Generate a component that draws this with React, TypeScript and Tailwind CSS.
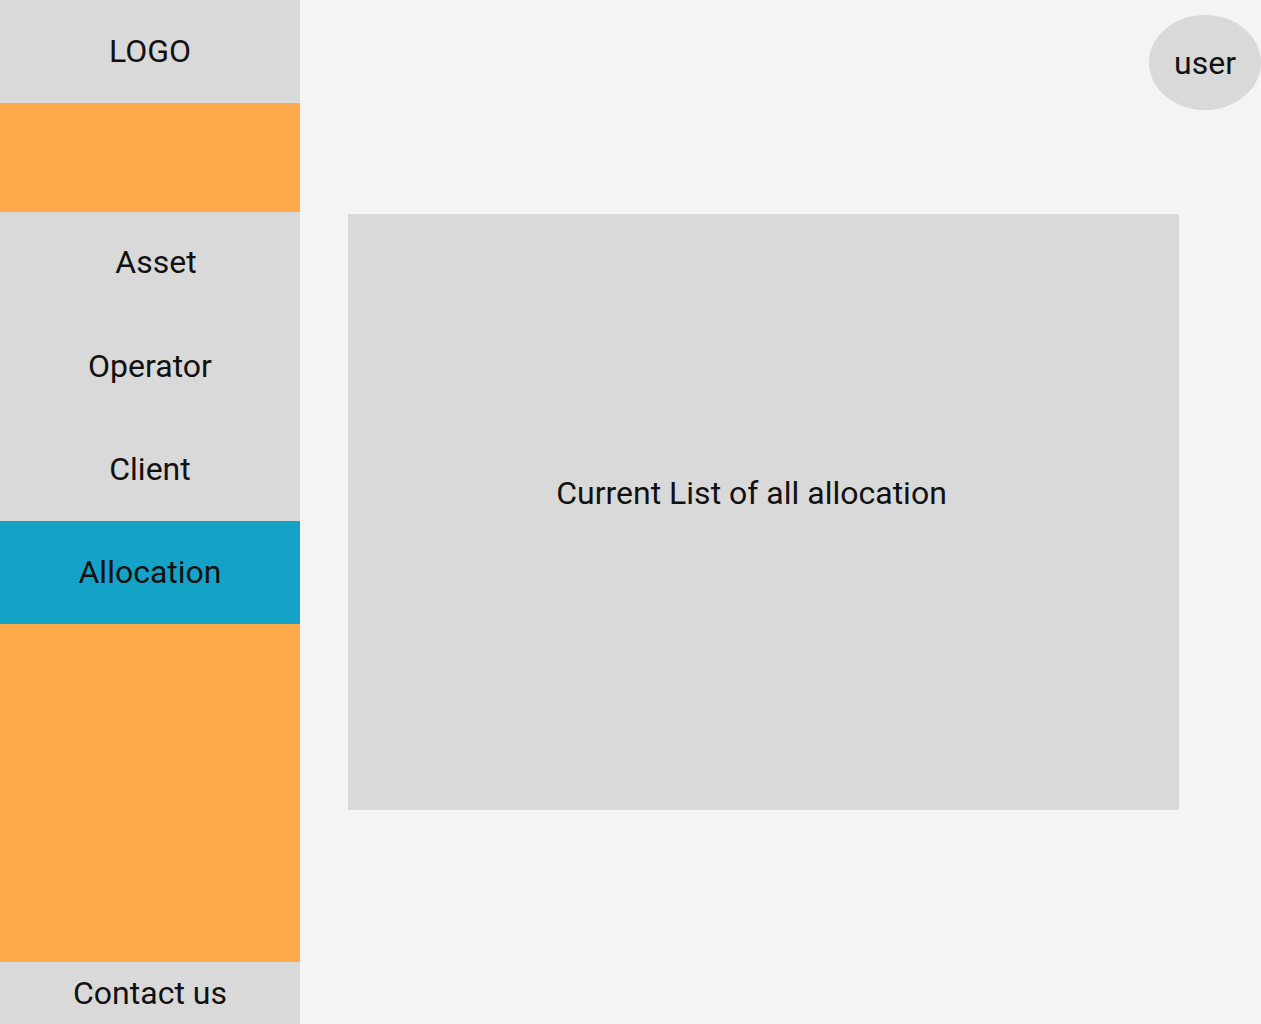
const navTop = [
  { label: "Asset", extra: "pl-[12px] pb-[4px]" },
  { label: "Operator", extra: "pb-[2px]" },
  { label: "Client", extra: "pb-[2px]" },
]

export default function App() {
  return (
    <div className="flex w-full h-[1024px] bg-[#f4f4f4] text-[#111] font-['Roboto',sans-serif] text-[32px] overflow-hidden">
      <aside className="w-[300px] shrink-0 flex flex-col bg-[#d9d9d9]">
        <div className="h-[103px] flex items-center justify-center pb-[2px]">LOGO</div>
        <div className="h-[109px] bg-[#ffaa4a]" />
        {navTop.map((item) => (
          <div
            key={item.label}
            className={`h-[103px] flex items-center justify-center ${item.extra}`}
          >
            {item.label}
          </div>
        ))}
        <div className="h-[103px] flex items-center justify-center bg-[#14a3c7] pb-[1px]">
          Allocation
        </div>
        <div className="flex-1 bg-[#ffaa4a]" />
        <div className="h-[62px] flex items-center justify-center">Contact us</div>
      </aside>

      <main className="flex-1 flex flex-col">
        <div className="h-[214px] flex justify-end items-start pt-[15px]">
          <div className="w-[112px] h-[95px] rounded-[50%] bg-[#d9d9d9] flex items-center justify-center">
            user
          </div>
        </div>
        <div className="ml-[48px] w-[831px] h-[596px] bg-[#d9d9d9] flex items-center justify-center pr-[24px] pb-[38px]">
          Current List of all allocation
        </div>
      </main>
    </div>
  )
}
